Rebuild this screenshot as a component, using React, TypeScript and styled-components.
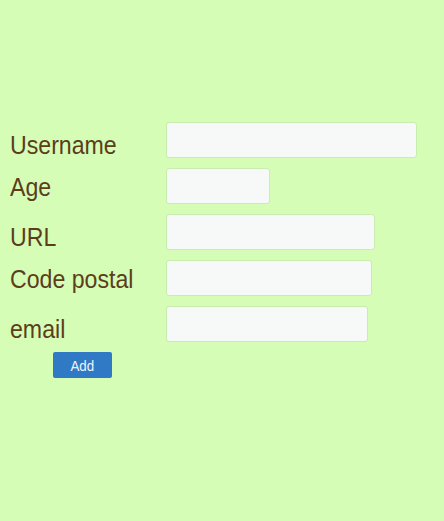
import React from "react";
import styled, { createGlobalStyle } from "styled-components";

const Global = createGlobalStyle`
  html, body { margin: 0; padding: 0; background: #d6fdb5; }
  body { font-family: "Liberation Sans", Arial, sans-serif; }
`;

const Page = styled.div`
  width: 444px;
  height: 521px;
  background: #d6fdb5;
  padding-top: 122px;
  box-sizing: border-box;
`;

const Form = styled.form`
  display: flex;
  flex-direction: column;
  gap: 10px;
  margin: 0;
`;

const Row = styled.div`
  display: flex;
  align-items: flex-end;
  height: 36px;
`;

const Label = styled.label<{ $offset: number }>`
  display: block;
  width: 166px;
  flex: none;
  padding-left: 10px;
  box-sizing: border-box;
  font-family: "Liberation Sans", Arial, sans-serif;
  font-size: 26px;
  line-height: 26px;
  color: #5b3d1c;
  white-space: nowrap;
  transform: scaleX(0.89);
  transform-origin: 10px center;
  margin-bottom: ${(p) => p.$offset}px;
`;

const Input = styled.input<{ $w: number }>`
  width: ${(p) => p.$w}px;
  height: 36px;
  box-sizing: border-box;
  border: 1px solid #c9ecb0;
  border-radius: 3px;
  background: #f6f9f8;
  padding: 0 8px;
  margin: 0;
  outline: none;
`;

const ButtonRow = styled.div`
  padding-left: 53px;
`;

const Button = styled.button`
  width: 59px;
  height: 26px;
  display: flex;
  align-items: center;
  justify-content: center;
  background: #3079c5;
  border: none;
  border-radius: 2px;
  color: #eef4fb;
  font-family: "Liberation Sans", Arial, sans-serif;
  font-size: 15px;
  padding: 1px 0 0 0;
  cursor: pointer;
`;

const ButtonText = styled.span`
  display: inline-block;
  transform: scaleX(0.89);
`;

const fields = [
  { label: "Username", w: 251, off: 0 },
  { label: "Age", w: 104, off: 4 },
  { label: "URL", w: 209, off: 0 },
  { label: "Code postal", w: 206, off: 4 },
  { label: "email", w: 202, off: 0 },
];

export default function App() {
  return (
    <>
      <Global />
      <Page>
        <Form onSubmit={(e) => e.preventDefault()}>
          {fields.map((f) => (
            <Row key={f.label}>
              <Label $offset={f.off}>{f.label}</Label>
              <Input $w={f.w} type="text" />
            </Row>
          ))}
          <ButtonRow>
            <Button type="submit">
              <ButtonText>Add</ButtonText>
            </Button>
          </ButtonRow>
        </Form>
      </Page>
    </>
  );
}
